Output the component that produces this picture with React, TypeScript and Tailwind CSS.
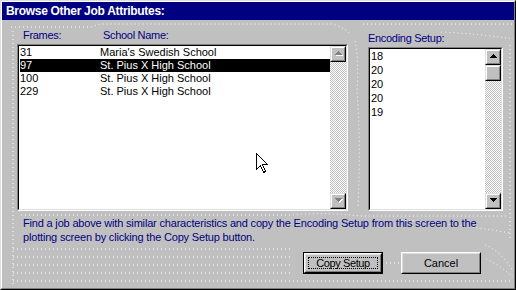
import React from "react";

const jobs = [
  { frames: "31", school: "Maria's Swedish School" },
  { frames: "97", school: "St. Pius X High School" },
  { frames: "100", school: "St. Pius X High School" },
  { frames: "229", school: "St. Pius X High School" },
];

const encoding = ["18", "20", "20", "20", "19"];

// dotted texture drawn on the dialog background
const dots = [
  "M10 26 H90 Q95 24 100 23 H330 Q342 25 350 34",
  "M362 23 H512",
  "M440 31 Q480 33 512 38",
  "M12 30 V285",
  "M354 40 Q358 60 356 90 Q360 140 357 205",
  "M509 44 V240",
  "M20 214 H290 Q320 211 360 215 H505",
  "M400 219 Q450 222 510 232",
  "M12 248 H292",
  "M12 256 H292",
  "M12 264 H292",
  "M12 272 H292",
  "M12 280 H510",
  "M385 262 H398",
  "M484 244 Q500 250 512 270",
  "M485 258 Q500 265 512 276",
];

function DottedTexture() {
  return (
    <svg className="absolute inset-0" width="516" height="290" viewBox="0 0 516 290">
      {dots.map((d, i) => (
        <path key={i} d={d} fill="none" stroke="#ffffff" strokeWidth="1" strokeDasharray="1 3" />
      ))}
    </svg>
  );
}

function Arrow({ dir, disabled }: { dir: "up" | "down"; disabled?: boolean }) {
  const pts = dir === "up" ? "4,0 8,4 0,4" : "0,0 8,0 4,4";
  return (
    <svg width="9" height="6" viewBox="0 0 9 6" shapeRendering="crispEdges">
      {disabled ? (
        <>
          <polygon points={pts} fill="#ffffff" transform="translate(1,1)" />
          <polygon points={pts} fill="#808080" />
        </>
      ) : (
        <polygon points={pts} fill="#000000" />
      )}
    </svg>
  );
}

function ScrollButton({ children }: { children?: React.ReactNode }) {
  return (
    <div className="w-[16px] h-[16px] border border-t-[#dfdfdf] border-l-[#dfdfdf] border-r-black border-b-black">
      <div className="w-full h-full bg-[#c0c0c0] border border-t-white border-l-white border-r-[#808080] border-b-[#808080] flex items-center justify-center">
        {children}
      </div>
    </div>
  );
}

function ScrollBar({ disabled, thumb }: { disabled?: boolean; thumb?: boolean }) {
  return (
    <div className="w-[16px] h-full flex flex-col">
      <ScrollButton>
        <Arrow dir="up" disabled={disabled} />
      </ScrollButton>
      <div className="flex-1 bg-[image:repeating-conic-gradient(#ffffff_0%_25%,#c0c0c0_0%_50%)] bg-[length:2px_2px]">
        {thumb && <ScrollButton />}
      </div>
      <ScrollButton>
        <Arrow dir="down" disabled={disabled} />
      </ScrollButton>
    </div>
  );
}

function Sunken({ className, children }: { className: string; children: React.ReactNode }) {
  return (
    <div className={`border border-t-[#808080] border-l-[#808080] border-r-white border-b-white ${className}`}>
      <div className="w-full h-full border border-t-black border-l-black border-r-[#dfdfdf] border-b-[#dfdfdf] bg-white flex">
        {children}
      </div>
    </div>
  );
}

function Button({ label, isDefault }: { label: string; isDefault?: boolean }) {
  return (
    <div className={`w-[80px] h-[22px] bg-[#c0c0c0] ${isDefault ? "border border-black" : ""}`}>
      <div className="w-full h-full border border-t-white border-l-white border-r-black border-b-black">
        <div className="w-full h-full border border-t-[#dfdfdf] border-l-[#dfdfdf] border-r-[#808080] border-b-[#808080] flex items-center justify-center p-[2px]">
          <div
            className={`w-full h-full flex items-center justify-center text-black ${
              isDefault ? "border border-dotted border-black tracking-[-0.4px]" : ""
            }`}
          >
            {label}
          </div>
        </div>
      </div>
    </div>
  );
}

export default function App() {
  return (
    <div className="w-[516px] h-[290px] relative overflow-hidden bg-[#c0c0c0] font-['Liberation_Sans',Arial,sans-serif] text-[11px] leading-[13px] border border-t-[#dfdfdf] border-l-[#dfdfdf] border-r-black border-b-black">
      <DottedTexture />
      <div className="relative w-full h-full border border-t-white border-l-white border-r-[#808080] border-b-[#808080]">
        <div className="h-[18px] bg-[#000080] text-white font-bold text-[12px] tracking-[-0.3px] pl-[4px] flex items-center">
          Browse Other Job Attributes:
        </div>

        <div className="flex pl-[15px] mt-[8px]">
          <div className="w-[331px] flex flex-col">
            <div className="flex h-[14px] text-[#000080] leading-[14px] tracking-[-0.3px]">
              <span className="w-[86px] pl-[6px]">Frames:</span>
              <span>School Name:</span>
            </div>
            <Sunken className="mt-[2px] h-[167px]">
              <div className="flex-1 pl-px">
                {jobs.map((job, i) => (
                  <div
                    key={job.frames}
                    className={`flex h-[13px] ${i === 1 ? "bg-black text-white" : "text-black"}`}
                  >
                    <span className="w-[80px]">{job.frames}</span>
                    <span>{job.school}</span>
                  </div>
                ))}
              </div>
              <ScrollBar disabled />
            </Sunken>
          </div>

          <div className="w-[135px] ml-[20px] mt-[3px] flex flex-col">
            <div className="h-[14px] text-[#000080] leading-[14px] tracking-[-0.3px]">Encoding Setup:</div>
            <Sunken className="mt-[2px] h-[164px]">
              <div className="flex-1 pl-px">
                {encoding.map((value, i) => (
                  <div key={i} className="h-[14px] leading-[14px] text-black">
                    {value}
                  </div>
                ))}
              </div>
              <ScrollBar thumb />
            </Sunken>
          </div>
        </div>

        <p className="pl-[21px] pr-[20px] mt-[5px] text-[#000080] leading-[14px] tracking-[-0.18px]">
          Find a job above with similar characteristics and copy the Encoding Setup from this screen to the
          plotting screen by clicking the Copy Setup button.
        </p>

        <div className="flex justify-end gap-[18px] pr-[33px] mt-[8px]">
          <Button label="Copy Setup" isDefault />
          <Button label="Cancel" />
        </div>
      </div>

      <svg
        className="absolute left-[255px] top-[152px]"
        width="13"
        height="21"
        viewBox="0 0 13 21"
        shapeRendering="crispEdges"
      >
        <polygon
          points="0.5,0.5 0.5,16.5 4.5,12.5 7.5,19.5 9.5,18.5 6.5,11.5 11.5,11.5"
          fill="#ffffff"
          stroke="#000000"
          strokeWidth="1"
        />
      </svg>
    </div>
  );
}
